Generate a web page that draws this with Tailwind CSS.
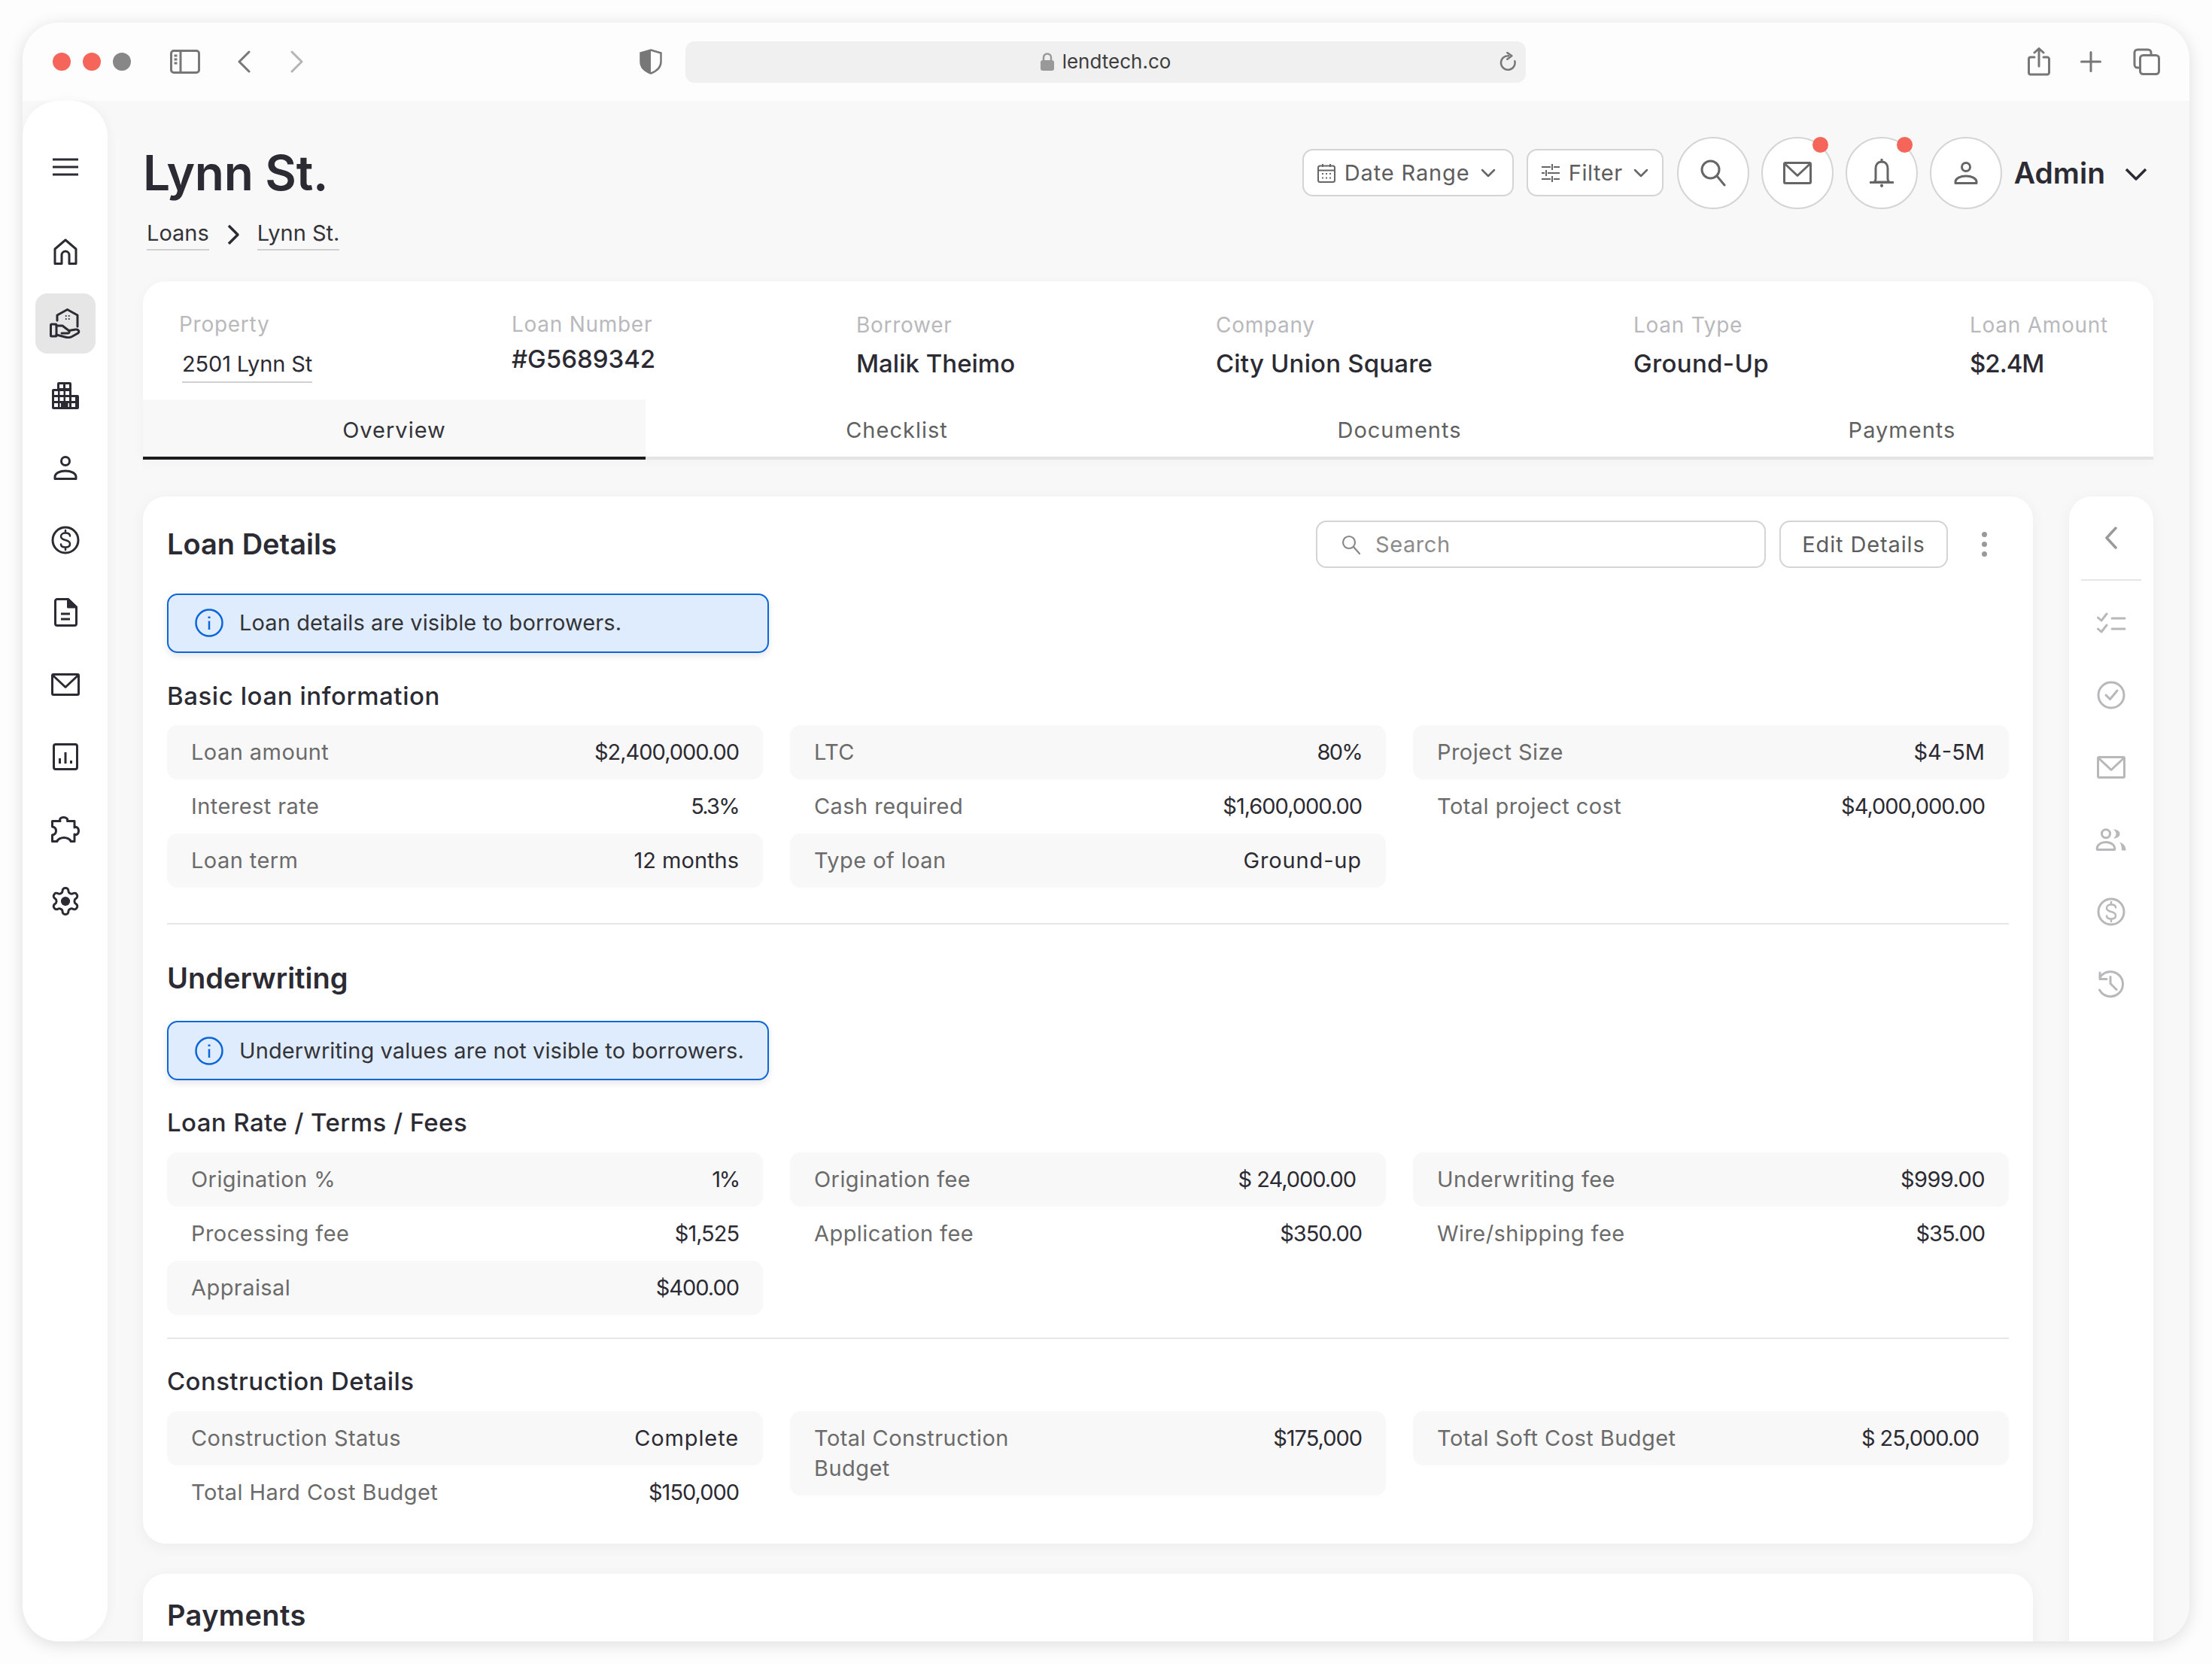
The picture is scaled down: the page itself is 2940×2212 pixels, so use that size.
<!DOCTYPE html>
<html lang="en">
<head>
<meta charset="UTF-8">
<title>Lynn St. - lendtech.co</title>
<script src="https://cdn.jsdelivr.net/npm/@tailwindcss/browser@4"></script>
</head>
<body class="w-[2940px] h-[2212px] bg-[#fdfdfd] font-['Inter',sans-serif] text-[#2c2b33] overflow-hidden">
<div class="pt-[30px] pl-[30px]">
<!-- browser window -->
<div class="w-[2880px] h-[2152px] rounded-[48px] bg-[#fdfdfd] shadow-[0_4px_22px_rgba(0,0,0,0.13)] overflow-hidden flex flex-col">

  <!-- browser toolbar -->
  <div class="h-[104px] shrink-0 flex items-center">
    <div class="ml-[40px] flex gap-[16px]">
      <div class="w-[24px] h-[24px] rounded-full bg-[#f6655a]"></div>
      <div class="w-[24px] h-[24px] rounded-full bg-[#f6655a]"></div>
      <div class="w-[24px] h-[24px] rounded-full bg-[#878787]"></div>
    </div>
    <svg class="ml-[52px]" width="40" height="32" viewBox="0 0 40 32" fill="none" stroke="#777" stroke-width="3"><rect x="1.500" y="1.500" width="37" height="29" rx="3.500"/><path d="M14 2v28M5.500 8h4M5.500 13h4M5.500 18h4"/></svg>
    <svg class="ml-[49px]" width="18" height="30" viewBox="0 0 18 30" fill="none" stroke="#777" stroke-width="3" stroke-linecap="round" stroke-linejoin="round"><path d="M16 2 3 15l13 13"/></svg>
    <svg class="ml-[53px]" width="17" height="30" viewBox="0 0 17 30" fill="none" stroke="#b5b5b5" stroke-width="3" stroke-linecap="round" stroke-linejoin="round"><path d="m2 2 13 13L2 28"/></svg>
    <svg class="ml-[447px]" width="30" height="34" viewBox="0 0 30 34" fill="none"><path d="M15 1.500 28.500 5.500V17c0 7.500-5.500 12.500-13.500 15.500C7 29.500 1.500 24.500 1.500 17V5.500Z" stroke="#777" stroke-width="2.500"/><path d="M15 1.500 1.500 5.500V17c0 7.500 5.500 12.500 13.500 15.500Z" fill="#777"/></svg>
    <div class="ml-[31px] w-[1117px] h-[55px] rounded-[12px] bg-[#f0f0f0] grid grid-cols-[1fr_auto_1fr] items-center">
      <div></div>
      <div class="flex items-center gap-[11px]">
        <svg width="18" height="24" viewBox="0 0 18 24"><path d="M4 11V6.500a5 5 0 0 1 10 0V11" fill="none" stroke="#999" stroke-width="2.500"/><rect y="10" width="18" height="14" rx="3" fill="#999"/></svg>
        <span class="text-[26px] leading-[32px] text-[#3d3d3d]">lendtech.co</span>
      </div>
      <div class="flex justify-end pr-[13px]">
        <svg width="22" height="26" viewBox="0 0 22 26" fill="none" stroke="#777" stroke-width="2.500" stroke-linecap="round" stroke-linejoin="round"><path d="M12 5.200A9.300 9.300 0 1 0 20.300 12.300"/><path d="m10.300 1 6 4.300-6 4.400"/></svg>
      </div>
    </div>
    <svg class="ml-[667px]" width="30" height="38" viewBox="0 0 30 38" fill="none" stroke="#777" stroke-width="3" stroke-linecap="round" stroke-linejoin="round"><path d="M9 13H4a2.500 2.500 0 0 0-2.500 2.500v18A2.500 2.500 0 0 0 4 36h22a2.500 2.500 0 0 0 2.500-2.500v-18A2.500 2.500 0 0 0 26 13h-5M15 25V2M9 7l6-5.500L21 7"/></svg>
    <svg class="ml-[40px]" width="28" height="28" viewBox="0 0 28 28" fill="none" stroke="#777" stroke-width="3" stroke-linecap="round"><path d="M14 1.500v25M1.500 14h25"/></svg>
    <svg class="ml-[42px]" width="36" height="36" viewBox="0 0 36 36" fill="none" stroke="#777" stroke-width="3"><rect x="9.500" y="9.500" width="25" height="25" rx="4"/><path d="M9.500 26H6a4 4 0 0 1-4-4V6a4 4 0 0 1 4-4h14a4 4 0 0 1 4 4v3.500"/></svg>
  </div>

  <!-- app -->
  <div class="flex-1 min-h-0 flex bg-[#f8f8f8]">

    <!-- left nav -->
    <aside class="w-[113px] shrink-0 bg-white rounded-[48px] shadow-[2px_0_14px_rgba(0,0,0,0.04)] flex flex-col items-center pt-[64px]">
      <div class="h-[48px] flex items-center">
        <svg width="34" height="24" viewBox="0 0 34 24" fill="none" stroke="#2c2b33" stroke-width="3"><path d="M0 2h34M0 12h34M0 22h34"/></svg>
      </div>
      <div class="mt-[40px] w-[80px] h-[96px] flex items-center justify-center">
        <svg width="32" height="35" viewBox="0 0 32 35" fill="none" stroke="#2c2b33" stroke-width="3" stroke-linejoin="round"><path d="M2 33.500V14L16 2l14 12v19.500h-9V22a5 5 0 0 0-10 0v11.500Z"/></svg>
      </div>
      <div class="w-[80px] h-[96px] flex items-center justify-center">
        <div class="w-[80px] h-[80px] rounded-[16px] bg-[#e6e6e6] flex items-center justify-center">
          <svg width="41" height="40" viewBox="0 0 41 40" fill="none" stroke="#2c2b33" stroke-width="3" stroke-linecap="round" stroke-linejoin="round"><path d="M10 16V9L23.500 1.500 37 9v15"/><rect x="1.500" y="21" width="7.500" height="16" rx="1"/><path d="M9 23h8l8.500 6.500c1.500 1.500.5 3.500-1.500 3.500h-8"/><path d="M25.500 29.500l9-1.500c4-.5 5.500 3 3 5l-8 4.500c-3 1.500-6 1.500-9 .5L9 35"/><path d="M21.700 10h.1M25.700 10h.1M21.700 14h.1M25.700 14h.1" stroke-width="2"/></svg>
        </div>
      </div>
      <div class="w-[80px] h-[96px] flex items-center justify-center">
        <svg width="36" height="36" viewBox="0 0 36 36"><path d="M0 11a2 2 0 0 1 2-2h5V2a2 2 0 0 1 2-2h15a2 2 0 0 1 2 2v15h8a2 2 0 0 1 2 2v15a2 2 0 0 1-2 2H2a2 2 0 0 1-2-2Z" fill="#2c2b33"/><path d="M10 3h5v5h-5ZM18 3h5v5h-5ZM3 12h5v5H3ZM10.500 12h5v5h-5ZM18 12h5v5h-5ZM3 20h5v5H3ZM10.500 20h5v5h-5ZM18 20h5v5h-5ZM26 20h5v5h-5ZM3 28h5v5H3ZM26 28h5v5h-5ZM10.500 28h1.500v5h-1.500ZM21.500 28h1.500v5h-1.500Z" fill="#fff"/></svg>
      </div>
      <div class="w-[80px] h-[96px] flex items-center justify-center">
        <svg width="32" height="32" viewBox="0 0 32 32" fill="none" stroke="#2c2b33" stroke-width="3" stroke-linejoin="round"><circle cx="16" cy="7" r="5.500"/><path d="M2 30.500v-2.500c0-5 6.500-8 14-8s14 3 14 8v2.500Z"/></svg>
      </div>
      <div class="w-[80px] h-[96px] flex items-center justify-center">
        <svg width="38" height="38" viewBox="0 0 38 38" fill="none" stroke="#2c2b33" stroke-width="3" stroke-linecap="round"><circle cx="19" cy="19" r="17"/><path d="M25 13.500c0-2.500-2.500-4-6-4s-6 1.800-6 4.500c0 3.200 2.700 4.200 6 5s6 1.800 6 5-2.500 4.500-6 4.500-6-1.500-6-4M19 6v3.500M19 28.500V32" stroke-width="2.500"/></svg>
      </div>
      <div class="w-[80px] h-[96px] flex items-center justify-center">
        <svg width="32" height="38" viewBox="0 0 32 38" fill="none" stroke="#2c2b33" stroke-width="3" stroke-linejoin="round"><path d="M5 1.500h14.500L30.500 12v22a2.500 2.500 0 0 1-2.500 2.500H5A2.500 2.500 0 0 1 2.500 34V4A2.500 2.500 0 0 1 5 1.500Z"/><path d="M19.500 1.500 30.500 12h-11Z" fill="#2c2b33"/><path d="M10 21h12M10 28h12"/></svg>
      </div>
      <div class="w-[80px] h-[96px] flex items-center justify-center">
        <svg width="38" height="30" viewBox="0 0 38 30" fill="none" stroke="#2c2b33" stroke-width="3" stroke-linejoin="round"><rect x="1.500" y="1.500" width="35" height="27" rx="1.500"/><path d="m2 2.500 17 16 17-16"/></svg>
      </div>
      <div class="w-[80px] h-[96px] flex items-center justify-center">
        <svg width="34" height="36" viewBox="0 0 34 36" fill="none" stroke="#2c2b33" stroke-width="3"><rect x="1.500" y="1.500" width="31" height="33" rx="2.500"/><path d="M9.500 27v-7M17 27V12M24.500 27v-4"/></svg>
      </div>
      <div class="w-[80px] h-[96px] flex items-center justify-center">
        <svg width="38" height="35" viewBox="0 0 38 35" fill="none" stroke="#2c2b33" stroke-width="3" stroke-linejoin="round"><path d="M1.500 33.500V25c3-.5 5-2.500 5-5.500S4.500 14.500 1.500 14V6.500H12C10.500 3.500 13 1.500 16.500 1.500S22.500 3.500 21.500 6.500H31V15c2-1.500 5.500 0 5.500 4.500S33 25.500 31 24V33.500H26C25.500 30.500 21 28.500 17 28.500S8.500 30.500 8 33.500Z"/></svg>
      </div>
      <div class="w-[80px] h-[96px] flex items-center justify-center">
        <svg width="42" height="42" viewBox="0 0 24 24" fill="none" stroke="#2c2b33" stroke-width="1.700" stroke-linejoin="round"><path d="M12.220 2h-.44a2 2 0 0 0-2 2v.18a2 2 0 0 1-1 1.730l-.43.25a2 2 0 0 1-2 0l-.15-.08a2 2 0 0 0-2.730.73l-.22.38a2 2 0 0 0 .73 2.730l.15.1a2 2 0 0 1 1 1.720v.51a2 2 0 0 1-1 1.740l-.15.09a2 2 0 0 0-.73 2.730l.22.38a2 2 0 0 0 2.730.73l.15-.08a2 2 0 0 1 2 0l.43.25a2 2 0 0 1 1 1.730V20a2 2 0 0 0 2 2h.44a2 2 0 0 0 2-2v-.18a2 2 0 0 1 1-1.730l.43-.25a2 2 0 0 1 2 0l.15.08a2 2 0 0 0 2.730-.73l.22-.39a2 2 0 0 0-.73-2.730l-.15-.08a2 2 0 0 1-1-1.740v-.5a2 2 0 0 1 1-1.740l.15-.09a2 2 0 0 0 .73-2.730l-.22-.38a2 2 0 0 0-2.730-.73l-.15.08a2 2 0 0 1-2 0l-.43-.25a2 2 0 0 1-1-1.730V4a2 2 0 0 0-2-2z"/><circle cx="12" cy="12" r="3.500" fill="#2c2b33" stroke="none"/></svg>
      </div>
    </aside>

    <!-- main -->
    <main class="flex-1 min-w-0 pl-[47px] pr-[48px]">

      <!-- page header -->
      <div class="pt-[48px] flex justify-between pr-[8px]">
        <div>
          <h1 class="h-[96px] flex items-center text-[64px] font-semibold tracking-[-0.005em]">Lynn St.</h1>
          <div class="mt-[12px] flex items-start pl-[5px] text-[29px] leading-[40px] text-[#333338]">
            <a class="border-b-2 border-[#d0d0d0] pb-[1px]">Loans</a>
            <svg class="mx-[22px] mt-[8px]" width="20" height="28" viewBox="0 0 20 28" fill="none" stroke="#2c2b33" stroke-width="3.500" stroke-linejoin="round"><path d="m4 2 12 12L4 26"/></svg>
            <a class="border-b-2 border-[#d0d0d0] pb-[1px]">Lynn St.</a>
          </div>
        </div>
        <div class="flex items-start">
          <button class="mt-[16px] w-[281px] h-[63px] rounded-[14px] border-2 border-[#d4d4d4] bg-white flex items-center pl-[18px] text-[#5d5d5d]">
            <svg width="24" height="26" viewBox="0 0 24 26" fill="none" stroke="#666" stroke-width="2"><rect x="1" y="3.500" width="22" height="21.500" rx="2.500"/><path d="M1 9.500h22M7 1v4M17 1v4"/><path d="M6 14h2M11 14h2M16 14h2M6 19.500h2M11 19.500h2M16 19.500h2"/></svg>
            <span class="ml-[12px] text-[29px] tracking-[0.03em]">Date Range</span>
            <svg class="ml-[14px]" width="20" height="12" viewBox="0 0 20 12" fill="none" stroke="#666" stroke-width="2.500" stroke-linecap="round" stroke-linejoin="round"><path d="m2 2 8 8 8-8"/></svg>
          </button>
          <button class="ml-[17px] mt-[16px] w-[182px] h-[63px] rounded-[14px] border-2 border-[#d4d4d4] bg-white flex items-center pl-[18px] text-[#5d5d5d]">
            <svg width="24" height="24" viewBox="0 0 24 24" fill="none" stroke="#666" stroke-width="2"><path d="M0 4h12M16 4h8M0 12h4M8 12h16M0 20h12M16 20h8M14 0v8M6 8v8M14 16v8"/></svg>
            <span class="ml-[12px] text-[29px] tracking-[0.02em]">Filter</span>
            <svg class="ml-[14px]" width="20" height="12" viewBox="0 0 20 12" fill="none" stroke="#666" stroke-width="2.500" stroke-linecap="round" stroke-linejoin="round"><path d="m2 2 8 8 8-8"/></svg>
          </button>
          <button class="ml-[18px] w-[96px] h-[96px] rounded-full border-2 border-[#d4d4d4] bg-white flex items-center justify-center">
            <svg width="34" height="36" viewBox="0 0 34 36" fill="none" stroke="#666" stroke-width="3" stroke-linecap="round"><circle cx="13.500" cy="13.500" r="11.500"/><path d="m22 22 10 12"/></svg>
          </button>
          <button class="relative ml-[16px] w-[96px] h-[96px] rounded-full border-2 border-[#d4d4d4] bg-white flex items-center justify-center">
            <svg width="38" height="30" viewBox="0 0 38 30" fill="none" stroke="#666" stroke-width="3" stroke-linejoin="round"><rect x="1.500" y="1.500" width="35" height="27" rx="1.500"/><path d="m2 2.500 17 16 17-16"/></svg>
            <span class="absolute top-[-2px] right-[5px] w-[21px] h-[21px] rounded-full bg-[#f6655a]"></span>
          </button>
          <button class="relative ml-[16px] w-[96px] h-[96px] rounded-full border-2 border-[#d4d4d4] bg-white flex items-center justify-center">
            <svg width="32" height="38" viewBox="0 0 32 38" fill="none" stroke="#666" stroke-width="3" stroke-linejoin="round"><path d="M16 4c-5 0-8 3.500-8 9v14c0 2-1 3-2 4h20c-1-1-2-2-2-4V13c0-5.500-3-9-8-9Z"/><path d="M1 31.500h30M16 1v3" stroke-linecap="round"/><path d="M16 35.500v.5" stroke-width="4" stroke-linecap="round"/></svg>
            <span class="absolute top-[-2px] right-[5px] w-[21px] h-[21px] rounded-full bg-[#f6655a]"></span>
          </button>
          <button class="ml-[16px] w-[96px] h-[96px] rounded-full border-2 border-[#d4d4d4] bg-white flex items-center justify-center">
            <svg width="32" height="30" viewBox="0 0 32 30" fill="none" stroke="#666" stroke-width="3" stroke-linejoin="round"><circle cx="16" cy="7" r="5.500"/><path d="M2 28.500v-2c0-4.500 6.500-7.500 14-7.500s14 3 14 7.500v2Z"/></svg>
          </button>
          <span class="ml-[16px] mt-[23px] leading-[50px] text-[39px] font-semibold">Admin</span>
          <svg class="ml-[26px] mt-[41px]" width="30" height="18" viewBox="0 0 30 18" fill="none" stroke="#2c2b33" stroke-width="3.500" stroke-linejoin="round"><path d="m2 2 13 13L28 2"/></svg>
        </div>
      </div>

      <!-- property summary card -->
      <section class="mt-[41px] h-[237px] rounded-t-[30px] bg-white shadow-[0_2px_18px_rgba(0,0,0,0.03)] flex flex-col">
        <div class="flex-1 flex pl-[48px] text-[#b9b9bd] tracking-[0.045em]">
          <div class="w-[442px] pt-[37px]">
            <div class="text-[28px] leading-[40px]">Property</div>
            <div class="mt-[13px] ml-[4px] w-fit border-b-2 border-[#d0d0d0] pb-[3px] text-[29px] leading-[40px] tracking-[-0.005em] text-[#2c2b33]">2501 Lynn St</div>
          </div>
          <div class="w-[458px] pt-[37px]">
            <div class="text-[28px] leading-[40px]">Loan Number</div>
            <div class="mt-[4px] text-[33px] leading-[44px] tracking-normal font-medium text-[#2c2b33]">#G5689342</div>
          </div>
          <div class="w-[478px] pt-[38px]">
            <div class="text-[28px] leading-[40px]">Borrower</div>
            <div class="mt-[9px] text-[33px] leading-[44px] tracking-normal font-medium text-[#2c2b33]">Malik Theimo</div>
          </div>
          <div class="w-[555px] pt-[38px]">
            <div class="text-[28px] leading-[40px]">Company</div>
            <div class="mt-[9px] text-[33px] leading-[44px] tracking-[0.005em] font-medium text-[#2c2b33]">City Union Square</div>
          </div>
          <div class="w-[447px] pt-[38px]">
            <div class="text-[28px] leading-[40px]">Loan Type</div>
            <div class="mt-[9px] text-[33px] leading-[44px] tracking-[0.01em] font-medium text-[#2c2b33]">Ground-Up</div>
          </div>
          <div class="pt-[38px]">
            <div class="text-[28px] leading-[40px]">Loan Amount</div>
            <div class="mt-[9px] text-[33px] leading-[44px] tracking-[-0.03em] font-medium text-[#2c2b33]">$2.4M</div>
          </div>
        </div>
        <div class="h-[80px] grid grid-cols-4 text-[29px] tracking-[0.035em] text-[#616161]">
          <div class="bg-[#f8f8f8] border-b-[4px] border-[#1b1b20] pt-[6px] flex items-center justify-center text-[#333338]">Overview</div>
          <div class="border-b-[4px] border-[#e4e4e4] pt-[6px] flex items-center justify-center">Checklist</div>
          <div class="border-b-[4px] border-[#e4e4e4] pt-[6px] flex items-center justify-center">Documents</div>
          <div class="border-b-[4px] border-[#e4e4e4] pt-[6px] flex items-center justify-center">Payments</div>
        </div>
      </section>

      <div class="mt-[49px] flex gap-[48px]">
        <div class="w-[2512px] shrink-0">

          <!-- loan details card -->
          <section class="rounded-[30px] bg-white shadow-[0_4px_20px_rgba(0,0,0,0.05)] px-[32px] pt-[32px] pb-[32px]">
            <div class="h-[63px] flex items-center">
              <h2 class="text-[38px] font-semibold">Loan Details</h2>
              <div class="ml-auto w-[598px] h-[63px] rounded-[14px] border-2 border-[#d4d4d4] flex items-center pl-[32px] text-[29px] tracking-[0.02em] text-[#8b8b8b]">
                <svg width="25" height="26" viewBox="0 0 25 26" fill="none" stroke="#888" stroke-width="2.200" stroke-linecap="round"><circle cx="10" cy="10" r="8"/><path d="m16 16 8 9"/></svg>
                <span class="ml-[20px]">Search</span>
              </div>
              <button class="ml-[18px] w-[224px] h-[63px] rounded-[14px] border-2 border-[#d4d4d4] text-[29px] tracking-[0.03em] text-[#5d5d5d]">Edit Details</button>
              <div class="ml-[45px] flex flex-col gap-[6px]">
                <span class="w-[7px] h-[7px] rounded-full bg-[#999]"></span>
                <span class="w-[7px] h-[7px] rounded-full bg-[#999]"></span>
                <span class="w-[7px] h-[7px] rounded-full bg-[#999]"></span>
              </div>
              <div class="w-[29px]"></div>
            </div>

            <div class="mt-[34px] w-[800px] h-[79px] rounded-[14px] border-2 border-[#0b66d9] bg-[#deecfd] shadow-[0_4px_10px_rgba(0,0,0,0.10)] flex items-center pl-[35px] pb-[2px]">
              <svg width="38" height="38" viewBox="0 0 38 38" fill="none" stroke="#0b66d9" stroke-width="2.500"><circle cx="19" cy="19" r="17.500"/><path d="M19 16.500V28"/><path d="M19 10.500v2.500" stroke-width="3"/></svg>
              <span class="ml-[21px] text-[29px] tracking-[0.0035em] text-[#333338]">Loan details are visible to borrowers.</span>
            </div>

            <h3 class="mt-[37px] text-[33px] leading-[40px] font-medium tracking-[0.017em]">Basic loan information</h3>
            <div class="mt-[19px] grid grid-cols-3 gap-x-[36px] items-start text-[29px] leading-[40px]">
              <div>
                <div class="flex justify-between px-[32px] py-[16px] rounded-[14px] bg-[#f8f8f8]"><span class="tracking-[0.015em] text-[#6b6b6b]">Loan amount</span><span class="tracking-[-0.035em]">$2,400,000.00</span></div>
                <div class="flex justify-between px-[32px] py-[16px]"><span class="tracking-[0.015em] text-[#6b6b6b]">Interest rate</span><span class="tracking-[-0.06em]">5.3%</span></div>
                <div class="flex justify-between px-[32px] py-[16px] rounded-[14px] bg-[#f8f8f8]"><span class="tracking-[0.015em] text-[#6b6b6b]">Loan term</span><span>12 months</span></div>
              </div>
              <div>
                <div class="flex justify-between px-[32px] py-[16px] rounded-[14px] bg-[#f8f8f8]"><span class="tracking-[0.015em] text-[#6b6b6b]">LTC</span><span class="tracking-[-0.06em]">80%</span></div>
                <div class="flex justify-between px-[32px] py-[16px]"><span class="tracking-[0.015em] text-[#6b6b6b]">Cash required</span><span class="tracking-[-0.035em]">$1,600,000.00</span></div>
                <div class="flex justify-between px-[32px] py-[16px] rounded-[14px] bg-[#f8f8f8]"><span class="tracking-[0.015em] text-[#6b6b6b]">Type of loan</span><span class="tracking-[0.03em]">Ground-up</span></div>
              </div>
              <div>
                <div class="flex justify-between px-[32px] py-[16px] rounded-[14px] bg-[#f8f8f8]"><span class="tracking-[0.015em] text-[#6b6b6b]">Project Size</span><span>$4-5M</span></div>
                <div class="flex justify-between px-[32px] py-[16px]"><span class="tracking-[0.015em] text-[#6b6b6b]">Total project cost</span><span class="tracking-[-0.035em]">$4,000,000.00</span></div>
              </div>
            </div>

            <div class="mt-[47px] h-[2px] bg-[#e6e6e6]"></div>

            <h2 class="mt-[46px] text-[38px] leading-[50px] font-semibold">Underwriting</h2>
            <div class="mt-[32px] w-[800px] h-[79px] rounded-[14px] border-2 border-[#0b66d9] bg-[#deecfd] shadow-[0_4px_10px_rgba(0,0,0,0.10)] flex items-center pl-[35px]">
              <svg width="38" height="38" viewBox="0 0 38 38" fill="none" stroke="#0b66d9" stroke-width="2.500"><circle cx="19" cy="19" r="17.500"/><path d="M19 16.500V28"/><path d="M19 10.500v2.500" stroke-width="3"/></svg>
              <span class="ml-[21px] text-[29px] tracking-[0.0035em] text-[#333338]">Underwriting values are not visible to borrowers.</span>
            </div>

            <h3 class="mt-[36px] text-[33px] leading-[40px] font-medium tracking-[0.012em]">Loan Rate / Terms / Fees</h3>
            <div class="mt-[20px] grid grid-cols-3 gap-x-[36px] items-start text-[29px] leading-[40px]">
              <div>
                <div class="flex justify-between px-[32px] py-[16px] rounded-[14px] bg-[#f8f8f8]"><span class="tracking-[0.015em] text-[#6b6b6b]">Origination %</span><span class="tracking-[-0.08em]">1%</span></div>
                <div class="flex justify-between px-[32px] py-[16px]"><span class="tracking-[0.015em] text-[#6b6b6b]">Processing fee</span><span class="tracking-[-0.035em]">$1,525</span></div>
                <div class="flex justify-between px-[32px] py-[16px] rounded-[14px] bg-[#f8f8f8]"><span class="tracking-[0.015em] text-[#6b6b6b]">Appraisal</span><span class="tracking-[-0.035em]">$400.00</span></div>
              </div>
              <div>
                <div class="flex justify-between pl-[32px] pr-[40px] py-[16px] rounded-[14px] bg-[#f8f8f8]"><span class="tracking-[0.015em] text-[#6b6b6b]">Origination fee</span><span class="tracking-[-0.035em]">$ 24,000.00</span></div>
                <div class="flex justify-between px-[32px] py-[16px]"><span class="tracking-[0.015em] text-[#6b6b6b]">Application fee</span><span class="tracking-[-0.035em]">$350.00</span></div>
              </div>
              <div>
                <div class="flex justify-between px-[32px] py-[16px] rounded-[14px] bg-[#f8f8f8]"><span class="tracking-[0.015em] text-[#6b6b6b]">Underwriting fee</span><span class="tracking-[-0.02em]">$999.00</span></div>
                <div class="flex justify-between px-[32px] py-[16px]"><span class="tracking-[0.015em] text-[#6b6b6b]">Wire/shipping fee</span><span class="tracking-[-0.035em]">$35.00</span></div>
              </div>
            </div>

            <div class="mt-[30px] h-[2px] bg-[#e6e6e6]"></div>

            <h3 class="mt-[36px] text-[33px] leading-[40px] font-medium tracking-[0.012em]">Construction Details</h3>
            <div class="mt-[20px] grid grid-cols-3 gap-x-[36px] items-start text-[29px] leading-[40px]">
              <div>
                <div class="flex justify-between px-[32px] py-[16px] rounded-[14px] bg-[#f8f8f8]"><span class="tracking-[0.015em] text-[#6b6b6b]">Construction Status</span><span class="tracking-[0.03em]">Complete</span></div>
                <div class="flex justify-between px-[32px] py-[16px]"><span class="tracking-[0.015em] text-[#6b6b6b]">Total Hard Cost Budget</span><span class="tracking-[-0.035em]">$150,000</span></div>
              </div>
              <div>
                <div class="flex justify-between px-[32px] py-[16px] rounded-[14px] bg-[#f8f8f8]"><span class="w-[320px] tracking-[0.015em] text-[#6b6b6b]">Total Construction Budget</span><span class="tracking-[-0.035em]">$175,000</span></div>
              </div>
              <div>
                <div class="flex justify-between pl-[32px] pr-[40px] py-[16px] rounded-[14px] bg-[#f8f8f8]"><span class="tracking-[0.015em] text-[#6b6b6b]">Total Soft Cost Budget</span><span class="tracking-[-0.035em]">$ 25,000.00</span></div>
              </div>
            </div>
          </section>

          <!-- payments card, cut off by the window -->
          <section class="mt-[40px] h-[200px] rounded-[30px] bg-white shadow-[0_4px_20px_rgba(0,0,0,0.05)] px-[32px] pt-[30px]">
            <h2 class="text-[38px] leading-[50px] font-semibold tracking-[0.01em]">Payments</h2>
          </section>
        </div>

        <!-- right rail -->
        <aside class="w-[112px] shrink-0 h-[1560px] rounded-[30px] bg-white shadow-[0_4px_20px_rgba(0,0,0,0.05)] flex flex-col items-center">
          <div class="h-[112px] w-[80px] border-b-2 border-[#e6e6e6] flex items-center justify-center">
            <svg width="18" height="30" viewBox="0 0 18 30" fill="none" stroke="#9a9a9a" stroke-width="3.500" stroke-linecap="round" stroke-linejoin="round"><path d="M15 2 3 15l12 13"/></svg>
          </div>
          <div class="mt-[8px] h-[96px] flex items-center justify-center">
            <svg width="39" height="28" viewBox="0 0 39 28" fill="none" stroke="#b8b8bc" stroke-width="3" stroke-linecap="round" stroke-linejoin="round"><path d="m1.500 7 4.500 4 7-9M1.500 22l4.500 4 7-9M20 8h17M20 22h17"/></svg>
          </div>
          <div class="h-[96px] flex items-center justify-center">
            <svg width="38" height="38" viewBox="0 0 38 38" fill="none" stroke="#b8b8bc" stroke-width="3" stroke-linecap="round" stroke-linejoin="round"><circle cx="19" cy="19" r="17"/><path d="m12 19 5.500 5.500L27 13"/></svg>
          </div>
          <div class="h-[96px] flex items-center justify-center">
            <svg width="38" height="30" viewBox="0 0 38 30" fill="none" stroke="#b8b8bc" stroke-width="3" stroke-linejoin="round"><rect x="1.500" y="1.500" width="35" height="27" rx="1.500"/><path d="m2 2.500 17 16 17-16"/></svg>
          </div>
          <div class="h-[96px] flex items-center justify-center">
            <svg width="42" height="31" viewBox="0 0 42 31" fill="none" stroke="#b8b8bc" stroke-width="3" stroke-linejoin="round"><circle cx="14" cy="7.300" r="5.500"/><path d="M2.500 28.500C1 23 7 18.500 14 18.500S27 23 25.500 28.500Z"/><path d="M24 1.500C29 1.500 32.500 4 32.500 7.500S29 13.500 24 13.500C26.500 11.500 27.500 9.500 27.500 7.500S26.500 3.500 24 1.500Z" fill="#b8b8bc" stroke="none"/><path d="M32 18.500C37 20 40.500 23.500 40.500 29.500H35C35 25 34.500 21.500 32 18.500Z" fill="#b8b8bc" stroke="none"/></svg>
          </div>
          <div class="h-[96px] flex items-center justify-center">
            <svg width="38" height="38" viewBox="0 0 38 38" fill="none" stroke="#b8b8bc" stroke-width="3" stroke-linecap="round"><circle cx="19" cy="19" r="17"/><path d="M25 13.500c0-2.500-2.500-4-6-4s-6 1.800-6 4.500c0 3.200 2.700 4.200 6 5s6 1.800 6 5-2.500 4.500-6 4.500-6-1.500-6-4M19 6v3.500M19 28.500V32" stroke-width="2.500"/></svg>
          </div>
          <div class="h-[96px] flex items-center justify-center">
            <svg width="38" height="38" viewBox="0 0 38 38" fill="none" stroke="#b8b8bc" stroke-width="3" stroke-linecap="round" stroke-linejoin="round"><path d="M5 9A16.500 16.500 0 1 1 3.500 27"/><path d="M4 4v8.500h9M18 9.500v9l8 8"/></svg>
          </div>
        </aside>
      </div>
    </main>
  </div>
</div>
</div>
</body>
</html>
